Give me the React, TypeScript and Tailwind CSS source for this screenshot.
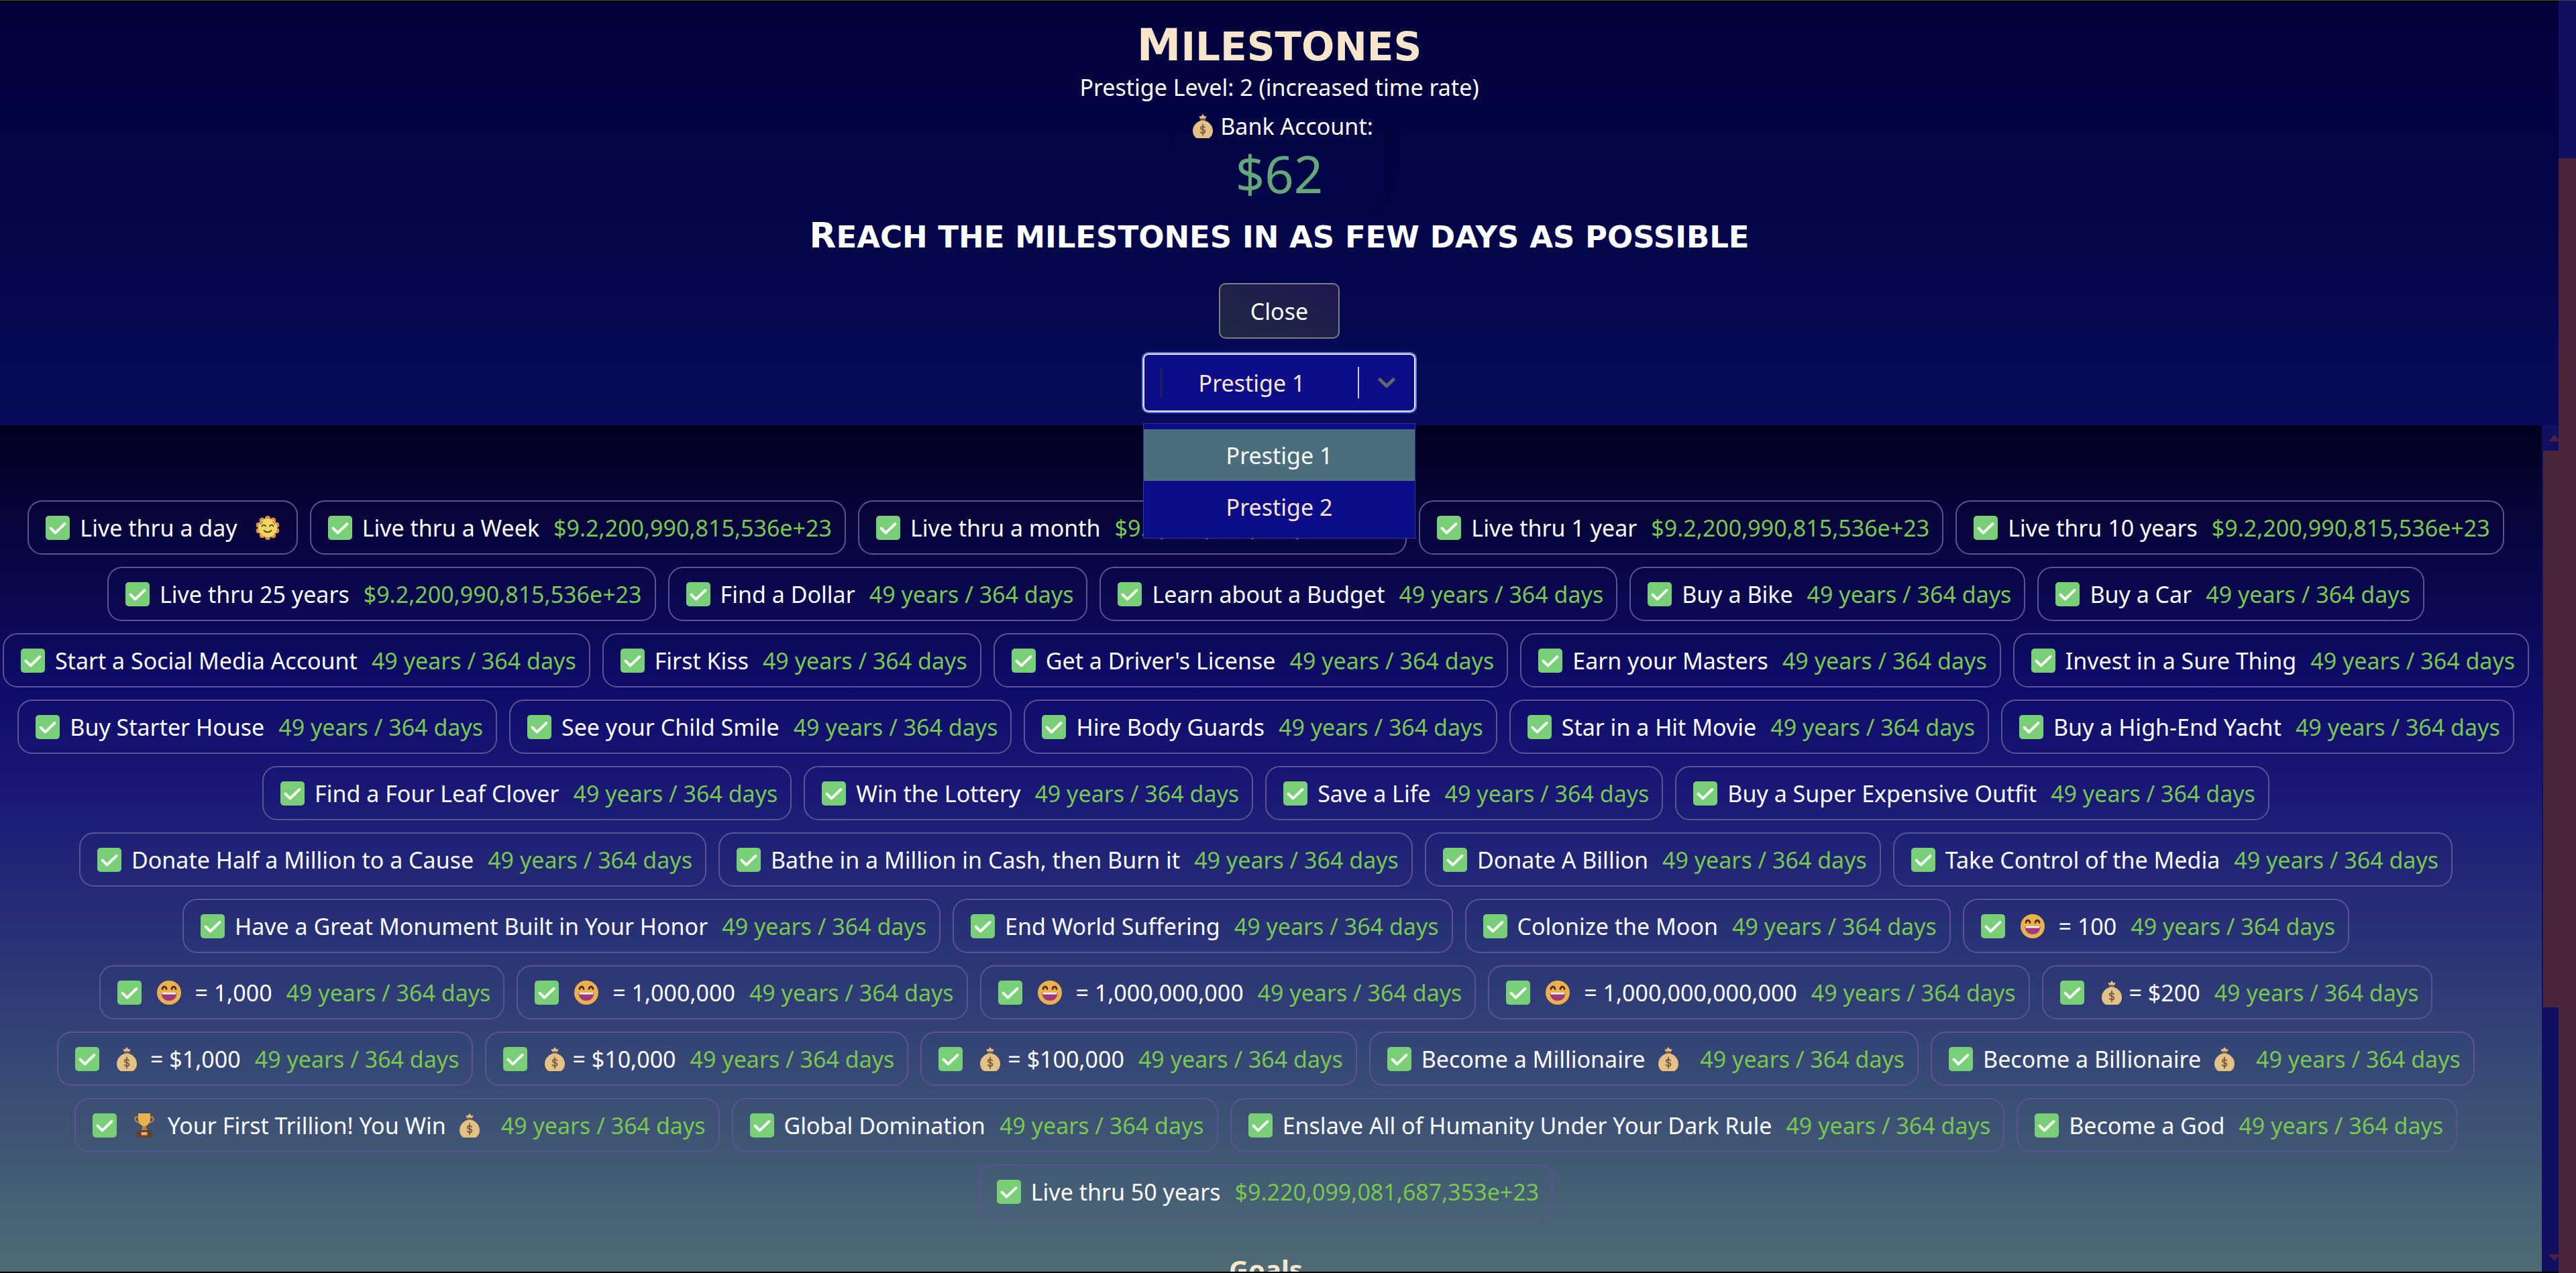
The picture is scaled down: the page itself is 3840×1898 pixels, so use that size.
import { ReactNode, useState } from 'react';

const CheckIcon = () => (
  <svg viewBox="0 0 36 36" role="img" aria-label="done" className="mx-1.5 h-9 w-9 shrink-0">
    <rect width="36" height="36" rx="5" fill="#79ce78" />
    <path d="M7.5 18.5l7 7L28.5 12" fill="none" stroke="#f4f7f2" strokeWidth="4" strokeLinecap="round" strokeLinejoin="round" />
  </svg>
);

const MoneyBag = () => (
  <svg viewBox="0 0 36 36" role="img" aria-label="money bag" className="mx-2 inline-block h-9 w-9 align-[-5px]">
    <path d="M12.4 3.2l3.2.3L18 0l2.4 3.5 3.2-.3L21.6 8h-7.2z" fill="#e4c185" />
    <path d="M14.2 6.5h7.6V11h-7.6z" fill="#7d5844" />
    <path d="M18 9.5C25 9.5 33 16 33 25c0 5-2.5 9-6 11H9c-3.5-2-6-6-6-11C3 16 11 9.5 18 9.5z" fill="#e4c185" />
    <path
      d="M21.2 20.3c-.6-1.2-1.8-1.7-3.2-1.7-1.9 0-3.2 1-3.2 2.4 0 3.4 6.6 1.5 6.6 5 0 1.5-1.4 2.5-3.4 2.5-1.6 0-2.9-.7-3.4-1.9M18 15.5v16"
      fill="none"
      stroke="#7d5844"
      strokeWidth="1.8"
      strokeLinecap="round"
    />
  </svg>
);

const Grin = () => (
  <svg viewBox="0 0 36 36" role="img" aria-label="grinning face" className="ml-2 mr-3 inline-block h-9 w-9 align-[-5px]">
    <circle cx="18" cy="18" r="18" fill="#ebb14c" />
    <path d="M8 12.5c.8-4.5 5.2-4.5 6 0M22 12.5c.8-4.5 5.2-4.5 6 0" fill="none" stroke="#4b2f26" strokeWidth="2.8" strokeLinecap="round" />
    <path d="M6.5 18h23C29.5 25.5 25 30 18 30S6.5 25.5 6.5 18z" fill="#a0387f" />
    <path d="M7.5 18h21v2.6h-21z" fill="#f6f3f4" />
  </svg>
);

const Sun = () => (
  <svg viewBox="0 0 36 36" role="img" aria-label="sun" className="mx-1.5 h-9 w-9 shrink-0">
    <g fill="#e8894a">
      <circle cx="18" cy="4" r="4" />
      <circle cx="26.2" cy="6.7" r="4" />
      <circle cx="31.3" cy="13.7" r="4" />
      <circle cx="31.3" cy="22.3" r="4" />
      <circle cx="26.2" cy="29.3" r="4" />
      <circle cx="18" cy="32" r="4" />
      <circle cx="9.8" cy="29.3" r="4" />
      <circle cx="4.7" cy="22.3" r="4" />
      <circle cx="4.7" cy="13.7" r="4" />
      <circle cx="9.8" cy="6.7" r="4" />
    </g>
    <circle cx="18" cy="18" r="14" fill="#f0d65c" />
    <path d="M9.5 15.5c1-2.6 4.5-2.6 5.5 0M21 15.5c1-2.6 4.5-2.6 5.5 0M12.5 22c2.5 3.2 8.5 3.2 11 0" fill="none" stroke="#42301f" strokeWidth="1.8" strokeLinecap="round" />
    <path d="M7.5 12.5c.5-2 1.5-3 3-3.8M28.5 12.5c-.5-2-1.5-3-3-3.8" fill="none" stroke="#42301f" strokeWidth="1" strokeLinecap="round" />
  </svg>
);

const Trophy = () => (
  <svg viewBox="0 0 36 36" role="img" aria-label="trophy" className="mx-2 inline-block h-9 w-9 align-[-5px]">
    <path d="M10 6.5C6 4 3.5 6 4.5 9.5 5.3 12.5 8.5 13.5 12 14M26 6.5c4-2.5 6.5-.5 5.5 3-.8 3-4 4-7.5 4.5" fill="none" stroke="#bd8236" strokeWidth="2.2" />
    <path d="M15.5 17h5l1 6 2 3h-11l2-3z" fill="#bd8236" />
    <path d="M9 0h18v8c0 6-3.5 10.5-9 11-5.5-.5-9-5-9-11z" fill="#ebb14c" />
    <path d="M7.5 25h21L31 36H5z" fill="#5e4235" />
    <path d="M13.5 28h9v4.5h-9z" fill="#ebb14c" />
  </svg>
);

interface Milestone {
  title: ReactNode;
  value?: string;
}

const BIG = '$9.2,200,990,815,536e+23';
const SPAN = '49 years / 364 days';

const milestones: Milestone[] = [
  { title: 'Live thru a day' },
  { title: 'Live thru a Week', value: BIG },
  { title: 'Live thru a month', value: BIG },
  { title: 'Live thru 1 year', value: BIG },
  { title: 'Live thru 10 years', value: BIG },
  { title: 'Live thru 25 years', value: BIG },
  { title: 'Find a Dollar', value: SPAN },
  { title: 'Learn about a Budget', value: SPAN },
  { title: 'Buy a Bike', value: SPAN },
  { title: 'Buy a Car', value: SPAN },
  { title: 'Start a Social Media Account', value: SPAN },
  { title: 'First Kiss', value: SPAN },
  { title: "Get a Driver's License", value: SPAN },
  { title: 'Earn your Masters', value: SPAN },
  { title: 'Invest in a Sure Thing', value: SPAN },
  { title: 'Buy Starter House', value: SPAN },
  { title: 'See your Child Smile', value: SPAN },
  { title: 'Hire Body Guards', value: SPAN },
  { title: 'Star in a Hit Movie', value: SPAN },
  { title: 'Buy a High-End Yacht', value: SPAN },
  { title: 'Find a Four Leaf Clover', value: SPAN },
  { title: 'Win the Lottery', value: SPAN },
  { title: 'Save a Life', value: SPAN },
  { title: 'Buy a Super Expensive Outfit', value: SPAN },
  { title: 'Donate Half a Million to a Cause', value: SPAN },
  { title: 'Bathe in a Million in Cash, then Burn it', value: SPAN },
  { title: 'Donate A Billion', value: SPAN },
  { title: 'Take Control of the Media', value: SPAN },
  { title: 'Have a Great Monument Built in Your Honor', value: SPAN },
  { title: 'End World Suffering', value: SPAN },
  { title: 'Colonize the Moon', value: SPAN },
  { title: <><Grin /> = 100</>, value: SPAN },
  { title: <><Grin /> = 1,000</>, value: SPAN },
  { title: <><Grin /> = 1,000,000</>, value: SPAN },
  { title: <><Grin /> = 1,000,000,000</>, value: SPAN },
  { title: <><Grin /> = 1,000,000,000,000</>, value: SPAN },
  { title: <><MoneyBag />= $200</>, value: SPAN },
  { title: <><MoneyBag /> = $1,000</>, value: SPAN },
  { title: <><MoneyBag />= $10,000</>, value: SPAN },
  { title: <><MoneyBag />= $100,000</>, value: SPAN },
  { title: <>Become a Millionaire <MoneyBag /></>, value: SPAN },
  { title: <>Become a Billionaire <MoneyBag /></>, value: SPAN },
  { title: <><Trophy /> Your First Trillion! You Win <MoneyBag /></>, value: SPAN },
  { title: 'Global Domination', value: SPAN },
  { title: 'Enslave All of Humanity Under Your Dark Rule', value: SPAN },
  { title: 'Become a God', value: SPAN },
  { title: 'Live thru 50 years', value: '$9.220,099,081,687,353e+23' },
];

const MilestoneChip = ({ title, value }: Milestone) => (
  <li className="flex h-[81px] items-center whitespace-nowrap rounded-[22px] border-2 border-[#5d5393] px-[19px]">
    <CheckIcon />
    <span className="ml-[9px] mr-[21px]">{title}</span>
    {value ? <span className="text-[#77c84e]">{value}</span> : <Sun />}
  </li>
);

const PRESTIGES = ['Prestige 1', 'Prestige 2'];

const PrestigeSelect = () => {
  const [selected, setSelected] = useState('Prestige 1');

  return (
    <div className="relative w-[406px]">
      <div className="flex h-[87px] items-center rounded-[8px] border-2 border-[#f7e6cb] bg-[#0d0d8a] outline-2 outline-[#4c7ff0]">
        <div className="flex flex-1 items-center pl-6">
          <span className="h-[42px] w-0.5 bg-[#2b2b3d]" />
          <select
            aria-label="Prestige"
            value={selected}
            onChange={e => setSelected(e.target.value)}
            className="flex-1 appearance-none bg-transparent pr-6 text-center text-[#f7e6cb] outline-none [text-align-last:center]"
          >
            {PRESTIGES.map(p => (
              <option key={p}>{p}</option>
            ))}
          </select>
        </div>
        <span className="h-[47px] w-0.5 bg-[#cccccc]" />
        <svg viewBox="0 0 26 16" className="mx-7 h-4 w-[26px]">
          <path d="M3 3l10 9.5L23 3" fill="none" stroke="#666666" strokeWidth="5" strokeLinecap="round" strokeLinejoin="round" />
        </svg>
      </div>
      <ul role="listbox" className="absolute left-0 right-0 top-full z-10 mt-[17px] border border-[#33339a] bg-[#0d0d8a] py-2">
        {PRESTIGES.map(p => (
          <li key={p} role="option" aria-selected={p === selected}>
            <button
              onClick={() => setSelected(p)}
              className={
                p === selected
                  ? 'h-[77px] w-full bg-[#4a6e7b] text-white'
                  : 'h-[77px] w-full text-[#f7e6cb]'
              }
            >
              {p}
            </button>
          </li>
        ))}
      </ul>
    </div>
  );
};

const Header = () => (
  <header className="flex flex-col items-center bg-linear-to-b from-[#02023a] to-[#070b59] pb-5 pt-[34px]">
    <h1 className="font-['DejaVu_Sans',sans-serif] text-[58px] font-bold uppercase leading-[62px] text-[#f7e6cb] first-letter:text-[66px]">
      Milestones
    </h1>
    <p className="leading-[58px]">Prestige Level: 2 (increased time rate)</p>
    <div className="flex w-[314px] flex-col items-center rounded-[24px] pb-2 shadow-[10px_10px_14px_rgba(0,0,0,0.14)]">
      <p className="flex items-center leading-[58px]">
        <MoneyBag /> Bank Account:
      </p>
      <p className="text-[76px] leading-[84px] text-[#64a87a]">$62</p>
    </div>
    <h2 className="mt-3 font-['DejaVu_Sans',sans-serif] text-[45px] font-bold uppercase leading-[60px] first-letter:text-[52px]">
      Reach the milestones in as few days as possible
    </h2>
    <button className="mb-[22px] mt-[38px] h-[83px] rounded-[10px] border-2 border-[#7c7f80] bg-linear-to-tr from-[#1d2943] to-[#201652] px-[45px]">
      Close
    </button>
    <PrestigeSelect />
  </header>
);

export default function App() {
  return (
    <div className="flex h-screen w-full overflow-hidden border-t border-[#444444] bg-[#020020] font-['Noto_Sans',sans-serif] text-[34px] leading-[46px] text-white">
      <div className="flex min-w-0 flex-1 flex-col border-y-2 border-black">
        <Header />
        <div className="flex min-h-0 flex-1">
          <main className="min-w-0 flex-1 overflow-hidden bg-[linear-gradient(to_bottom,#020020_0%,#0f0d6b_32%,#1a1a76_44%,#2b3576_63%,#4e6c74_100%)] pr-[15px] pt-28 text-center">
            <ul className="flex flex-wrap justify-center gap-[18px]">
              {milestones.map((m, i) => (
                <MilestoneChip key={i} {...m} />
              ))}
            </ul>
            <h2 className="mt-12 text-[40px] font-bold leading-[56px] text-[#f7e6cb]">Goals</h2>
          </main>
          {/* list scrollbar */}
          <div className="flex w-[25px] flex-col overflow-hidden bg-[#110f62]">
            <div className="flex h-[38px] shrink-0 items-center pl-2.5">
              <svg viewBox="0 0 18 10" className="h-2.5 w-[18px] shrink-0">
                <path d="M0 10L9 0l9 10z" fill="#4a253b" />
              </svg>
            </div>
            <div className="ml-0.5 flex-[830] bg-[#4a253b]" />
            <div className="flex flex-[378] items-end pb-4 pl-2.5">
              <svg viewBox="0 0 18 10" className="h-2.5 w-[18px] shrink-0">
                <path d="M0 0l9 10 9-10z" fill="#4a253b" />
              </svg>
            </div>
          </div>
        </div>
      </div>
      {/* page scrollbar */}
      <div className="flex w-[26px] flex-col bg-[#110f62]">
        <div className="flex-[235]" />
        <div className="flex-[1662] bg-[#4a253b]" />
      </div>
    </div>
  );
}
